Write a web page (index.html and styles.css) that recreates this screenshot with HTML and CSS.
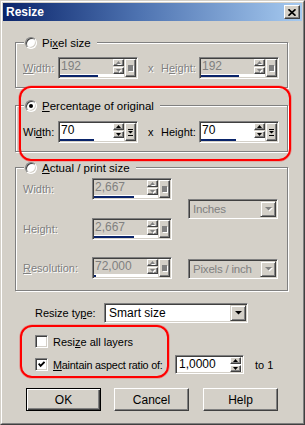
FILE: index.html
```html
<!DOCTYPE html>
<html>
<head>
<meta charset="utf-8">
<title>Resize</title>
<link rel="stylesheet" href="styles.css">
</head>
<body>
<div class="window">
  <div class="frame">
    <div class="titlebar">
      <span class="title">Resize</span>
      <span class="close"><svg width="8" height="7" viewBox="0 0 8 7"><path d="M0.5 0.3L7.5 6.7M7.5 0.3L0.5 6.7" stroke="#000" stroke-width="1.7" fill="none"/></svg></span>
    </div>
    <div class="content">
      <div class="group g1">
        <div class="legend"><span class="radio"></span><span>Pi<u>x</u>el size</span></div>
        <div class="row">
          <span class="flabel w35 ldis"><u>W</u>idth:</span>
          <div class="edit dis">
            <div class="edit-main">
              <div class="edit-top"><span class="edit-val">192</span><span class="spin"><span class="sb"><svg class="arr" width="5" height="3" viewBox="0 0 5 3"><path d="M2.5 0L5 3H0z"/></svg></span><span class="sb"><svg class="arr" width="5" height="3" viewBox="0 0 5 3"><path d="M0 0H5L2.5 3z"/></svg></span></span></div>
              <div class="edit-bar"><span class="fill" style="width:60%"></span></div>
            </div>
            <span class="slide"><span class="sq"></span></span>
          </div>
          <span class="times ldis">x</span>
          <span class="flabel w38 ldis">H<u>e</u>ight:</span>
          <div class="edit dis">
            <div class="edit-main">
              <div class="edit-top"><span class="edit-val">192</span><span class="spin"><span class="sb"><svg class="arr" width="5" height="3" viewBox="0 0 5 3"><path d="M2.5 0L5 3H0z"/></svg></span><span class="sb"><svg class="arr" width="5" height="3" viewBox="0 0 5 3"><path d="M0 0H5L2.5 3z"/></svg></span></span></div>
              <div class="edit-bar"><span class="fill" style="width:60%"></span></div>
            </div>
            <span class="slide"><span class="sq"></span></span>
          </div>
        </div>
      </div>

      <div class="group g2">
        <div class="legend"><span class="radio on"></span><span><u>P</u>ercentage of original</span></div>
        <div class="row">
          <span class="flabel w35">Wi<u>d</u>th:</span>
          <div class="edit">
            <div class="edit-main">
              <div class="edit-top"><span class="edit-val">70</span><span class="spin"><span class="sb"><svg class="arr" width="5" height="3" viewBox="0 0 5 3"><path d="M2.5 0L5 3H0z"/></svg></span><span class="sb"><svg class="arr" width="5" height="3" viewBox="0 0 5 3"><path d="M0 0H5L2.5 3z"/></svg></span></span></div>
              <div class="edit-bar"><span class="fill" style="width:53%"></span></div>
            </div>
            <span class="slide"><svg width="5" height="7" viewBox="0 0 5 7"><path d="M0 0H5V1H0z M0 2H5L2.5 4.5z M0 6H5V7H0z"/></svg></span>
          </div>
          <span class="times">x</span>
          <span class="flabel w38">Hei<u>g</u>ht:</span>
          <div class="edit">
            <div class="edit-main">
              <div class="edit-top"><span class="edit-val">70</span><span class="spin"><span class="sb"><svg class="arr" width="5" height="3" viewBox="0 0 5 3"><path d="M2.5 0L5 3H0z"/></svg></span><span class="sb"><svg class="arr" width="5" height="3" viewBox="0 0 5 3"><path d="M0 0H5L2.5 3z"/></svg></span></span></div>
              <div class="edit-bar"><span class="fill" style="width:55%"></span></div>
            </div>
            <span class="slide"><svg width="5" height="7" viewBox="0 0 5 7"><path d="M0 0H5V1H0z M0 2H5L2.5 4.5z M0 6H5V7H0z"/></svg></span>
          </div>
        </div>
      </div>

      <div class="group g3">
        <div class="legend"><span class="radio"></span><span><u>A</u>ctual / print size</span></div>
        <div class="g3grid">
          <span class="flabel ldis c1 r1">Width:</span>
          <div class="edit dis c2 r1">
            <div class="edit-main">
              <div class="edit-top"><span class="edit-val">2,667</span><span class="spin"><span class="sb"><svg class="arr" width="5" height="3" viewBox="0 0 5 3"><path d="M2.5 0L5 3H0z"/></svg></span><span class="sb"><svg class="arr" width="5" height="3" viewBox="0 0 5 3"><path d="M0 0H5L2.5 3z"/></svg></span></span></div>
              <div class="edit-bar"><span class="fill" style="width:62%"></span></div>
            </div>
            <span class="slide"><span class="sq"></span></span>
          </div>
          <span class="flabel ldis c1 r3">Height:</span>
          <div class="edit dis c2 r3">
            <div class="edit-main">
              <div class="edit-top"><span class="edit-val">2,667</span><span class="spin"><span class="sb"><svg class="arr" width="5" height="3" viewBox="0 0 5 3"><path d="M2.5 0L5 3H0z"/></svg></span><span class="sb"><svg class="arr" width="5" height="3" viewBox="0 0 5 3"><path d="M0 0H5L2.5 3z"/></svg></span></span></div>
              <div class="edit-bar"><span class="fill" style="width:62%"></span></div>
            </div>
            <span class="slide"><span class="sq"></span></span>
          </div>
          <span class="flabel ldis c1 r5"><u>R</u>esolution:</span>
          <div class="edit dis c2 r5">
            <div class="edit-main">
              <div class="edit-top"><span class="edit-val">72,000</span><span class="spin"><span class="sb"><svg class="arr" width="5" height="3" viewBox="0 0 5 3"><path d="M2.5 0L5 3H0z"/></svg></span><span class="sb"><svg class="arr" width="5" height="3" viewBox="0 0 5 3"><path d="M0 0H5L2.5 3z"/></svg></span></span></div>
              <div class="edit-bar"><span class="fill" style="width:3%"></span></div>
            </div>
            <span class="slide"><span class="sq"></span></span>
          </div>
          <div class="combo dis inches"><span class="combo-val">Inches</span><span class="combo-btn"><svg class="carr" width="7" height="4" viewBox="0 0 7 4"><path d="M0 0H7L3.5 3.6z"/></svg></span></div>
          <div class="combo dis ppi"><span class="combo-val">Pixels / inch</span><span class="combo-btn"><svg class="carr" width="7" height="4" viewBox="0 0 7 4"><path d="M0 0H7L3.5 3.6z"/></svg></span></div>
        </div>
      </div>

      <div class="typerow">
        <span class="typelabel">Resize ty<u>p</u>e:</span>
        <div class="combo smart"><span class="combo-val">Smart size</span><span class="combo-btn"><svg class="carr" width="7" height="4" viewBox="0 0 7 4"><path d="M0 0H7L3.5 3.6z"/></svg></span></div>
      </div>

      <div class="cbrow r-all"><span class="check"></span><span>Resi<u>z</u>e all layers</span></div>
      <div class="cbrow r-aspect">
        <span class="check"><svg width="7" height="7" viewBox="0 0 7 7"><path d="M0.6 2.6L2.6 4.8L6.5 0.8" fill="none" stroke="#000" stroke-width="1.9"/></svg></span>
        <span class="cblabel"><u>M</u>aintain aspect ratio of:</span>
        <div class="spinedit"><span class="edit-val">1,0000</span><span class="spin"><span class="sb"><svg class="arr" width="5" height="3" viewBox="0 0 5 3"><path d="M2.5 0L5 3H0z"/></svg></span><span class="sb"><svg class="arr" width="5" height="3" viewBox="0 0 5 3"><path d="M0 0H5L2.5 3z"/></svg></span></span></div>
        <span class="to1">to 1</span>
      </div>

      <div class="buttons">
        <button class="btn def">OK</button>
        <button class="btn b-cancel">Cancel</button>
        <button class="btn b-help">Help</button>
      </div>
    </div>
  </div>
  <div class="mark m1"></div>
  <div class="mark m2"></div>
</div>
</body>
</html>
```
FILE: styles.css
```css
* { box-sizing: border-box; }
html, body { margin: 0; padding: 0; }
body {
  background: #d4d0c8;
  font-family: "Liberation Sans", Arial, sans-serif;
  font-size: 11px;
  color: #000;
  width: 305px;
  height: 425px;
  overflow: hidden;
}
u { text-decoration: underline; text-underline-offset: 1px; }

.window {
  position: relative;
  width: 305px;
  height: 425px;
  border: 1px solid;
  border-color: #d4d0c8 #404040 #404040 #d4d0c8;
  background: #d4d0c8;
}
.frame {
  height: 100%;
  border: 1px solid;
  border-color: #fff #808080 #808080 #fff;
  padding: 1px;
}
.titlebar {
  height: 18px;
  display: flex;
  align-items: center;
  justify-content: space-between;
  padding: 0 2px 0 3px;
  background: linear-gradient(90deg, #0a246a 0%, #4d72b0 45%, #a6caf0 100%);
}
.title { color: #fff; font-weight: bold; font-size: 12px; }
.close {
  width: 16px; height: 14px;
  display: flex; align-items: center; justify-content: center;
  background: #d4d0c8;
  border: 1px solid;
  border-color: #fff #404040 #404040 #fff;
  box-shadow: inset -1px -1px 0 #808080;
}

.content { padding: 21px 0 0 12px; }

.group {
  width: 273px;
  border: 1px solid #808080;
  box-shadow: 1px 1px 0 #fff, inset 1px 1px 0 #fff;
  padding: 0 0 8px 7px;
}
.g2 { margin-top: 17px; }
.g2 .row { margin-top: 9px; }
.g3 { margin-top: 15px; padding-bottom: 11px; }

.legend {
  display: flex;
  align-items: center;
  gap: 5px;
  width: max-content;
  height: 13px;
  margin: -7px 0 0 1px;
  padding: 0 6px 0 1px;
  background: #d4d0c8;
  font-size: 11.5px;
}
.radio {
  position: relative;
  flex: none;
  width: 12px; height: 12px;
  border-radius: 50%;
  background: #fff;
  border: 1px solid;
  border-color: #808080 #fff #fff #808080;
  box-shadow: inset 1px 1px 0 #404040, inset -1px -1px 0 #d4d0c8;
}
.radio.on::after {
  content: "";
  position: absolute;
  left: 3px; top: 3px;
  width: 4px; height: 4px;
  border-radius: 50%;
  background: #000;
}

.row { display: flex; align-items: center; height: 22px; margin-top: 8px; }
.flabel { flex: none; }
.w35 { width: 35px; }
.w38 { width: 38px; }
.times { width: 23px; padding-left: 10px; flex: none; }
.ldis { color: #808080; text-shadow: 1px 1px 0 #fff; }

.edit {
  display: flex;
  flex: none;
  width: 80px; height: 22px;
  border: 1px solid;
  border-color: #808080 #fff #fff #808080;
  box-shadow: inset 1px 1px 0 #404040, inset -1px -1px 0 #d4d0c8;
  padding: 1px;
  background: #d4d0c8;
}
.edit-main { width: 64px; display: flex; flex-direction: column; }
.edit-top { display: flex; height: 15px; }
.edit-val { flex: 1; background: #fff; padding-left: 1px; line-height: 15px; font-size: 12px; }
.edit.dis .edit-val { background: #d4d0c8; color: #808080; }
.spin { width: 11px; flex: none; display: flex; flex-direction: column; justify-content: space-between; }
.sb {
  height: 7px;
  display: flex; align-items: center; justify-content: center;
  background: #d4d0c8;
  border: 1px solid;
  border-color: #fff #404040 #404040 #fff;
  box-shadow: inset -1px -1px 0 #808080;
}
.arr { display: block; fill: #000; }
.dis .arr { fill: #808080; filter: drop-shadow(1px 1px 0 #fff); }
.edit-bar { height: 3px; background: #fff; display: flex; align-items: flex-end; }
.fill { display: block; height: 2px; background: #0a246a; }
.slide {
  width: 11px; height: 18px;
  margin-left: 1px;
  flex: none;
  display: flex; align-items: center; justify-content: center;
  background: #d4d0c8;
  border: 1px solid;
  border-color: #fff #404040 #404040 #fff;
  box-shadow: inset -1px -1px 0 #808080;
}
.slide svg { display: block; fill: #000; }
.sq { width: 5px; height: 6px; background: #808080; box-shadow: 1px 1px 0 #fff; }

.g3grid {
  display: grid;
  grid-template-columns: 69px 80px 16px 90px;
  grid-template-rows: 22px 18px 22px 17px 22px;
  align-items: center;
  margin-top: 4px;
}
.c1 { grid-column: 1; }
.c2 { grid-column: 2; }
.r1 { grid-row: 1; }
.r3 { grid-row: 3; }
.r5 { grid-row: 5; }
.inches { grid-column: 4; grid-row: 1 / 4; align-self: center; }
.ppi { grid-column: 4; grid-row: 5; align-self: end; }

.combo {
  display: flex;
  align-items: center;
  height: 20px;
  border: 1px solid;
  border-color: #808080 #fff #fff #808080;
  box-shadow: inset 1px 1px 0 #404040, inset -1px -1px 0 #d4d0c8;
  padding: 1px;
  background: #fff;
}
.combo-val { flex: 1; padding-left: 3px; font-size: 12px; white-space: nowrap; overflow: hidden; }
.combo.dis { background: #d4d0c8; }
.combo.dis .combo-val { color: #808080; font-size: 11.5px; letter-spacing: -0.2px; }
.combo-btn {
  width: 16px; height: 16px; flex: none;
  display: flex; align-items: center; justify-content: center;
  background: #d4d0c8;
  border: 1px solid;
  border-color: #d4d0c8 #404040 #404040 #d4d0c8;
  box-shadow: inset 1px 1px 0 #fff, inset -1px -1px 0 #808080;
}
.carr { display: block; fill: #000; }
.combo.dis .carr { fill: #808080; filter: drop-shadow(1px 1px 0 #fff); }

.typerow { display: flex; align-items: center; height: 20px; margin: 12px 0 0 20px; }
.typelabel { width: 69px; flex: none; }
.smart { width: 144px; }

.cbrow { display: flex; align-items: center; gap: 5px; margin-left: 20px; }
.r-all { margin-top: 12px; height: 13px; }
.r-aspect { margin-top: 7px; height: 19px; }
.check {
  width: 13px; height: 13px; flex: none;
  display: flex; align-items: center; justify-content: center;
  background: #fff;
  border: 1px solid;
  border-color: #808080 #fff #fff #808080;
  box-shadow: inset 1px 1px 0 #404040, inset -1px -1px 0 #d4d0c8;
}
.check svg { display: block; }
.cblabel { width: 117px; flex: none; white-space: nowrap; letter-spacing: -0.2px; font-size: 10.8px; }
.spinedit {
  display: flex;
  width: 69px; height: 19px; flex: none;
  border: 1px solid;
  border-color: #808080 #fff #fff #808080;
  box-shadow: inset 1px 1px 0 #404040, inset -1px -1px 0 #d4d0c8;
  padding: 1px;
  background: #fff;
}
.spinedit .edit-val { padding-left: 2px; }
.spinedit .sb { height: 7px; }
.spinedit .spin { margin-right: 1px; }
.to1 { margin-left: 6px; }

.buttons { display: flex; margin: 14px 0 0 11px; }
.btn {
  width: 75px; height: 23px;
  padding: 0;
  font: inherit;
  font-size: 12px;
  color: #000;
  background: #d4d0c8;
  border: 1px solid;
  border-color: #fff #404040 #404040 #fff;
  box-shadow: inset -1px -1px 0 #808080;
}
.btn.def {
  border-color: #000;
  box-shadow: inset 1px 1px 0 #fff, inset -1px -1px 0 #404040, inset -2px -2px 0 #808080;
}
.b-cancel { margin-left: 13px; }
.b-help { margin-left: 14px; }

.mark {
  position: absolute;
  border: 2px solid #f00;
  border-radius: 12px;
  box-shadow: 0 0 0 0.6px rgba(255, 40, 40, 0.45);
  pointer-events: none;
}
.m1 { left: 18px; top: 85px; width: 272px; height: 75px; }
.m2 { left: 19px; top: 324px; width: 149px; height: 53px; }
```
